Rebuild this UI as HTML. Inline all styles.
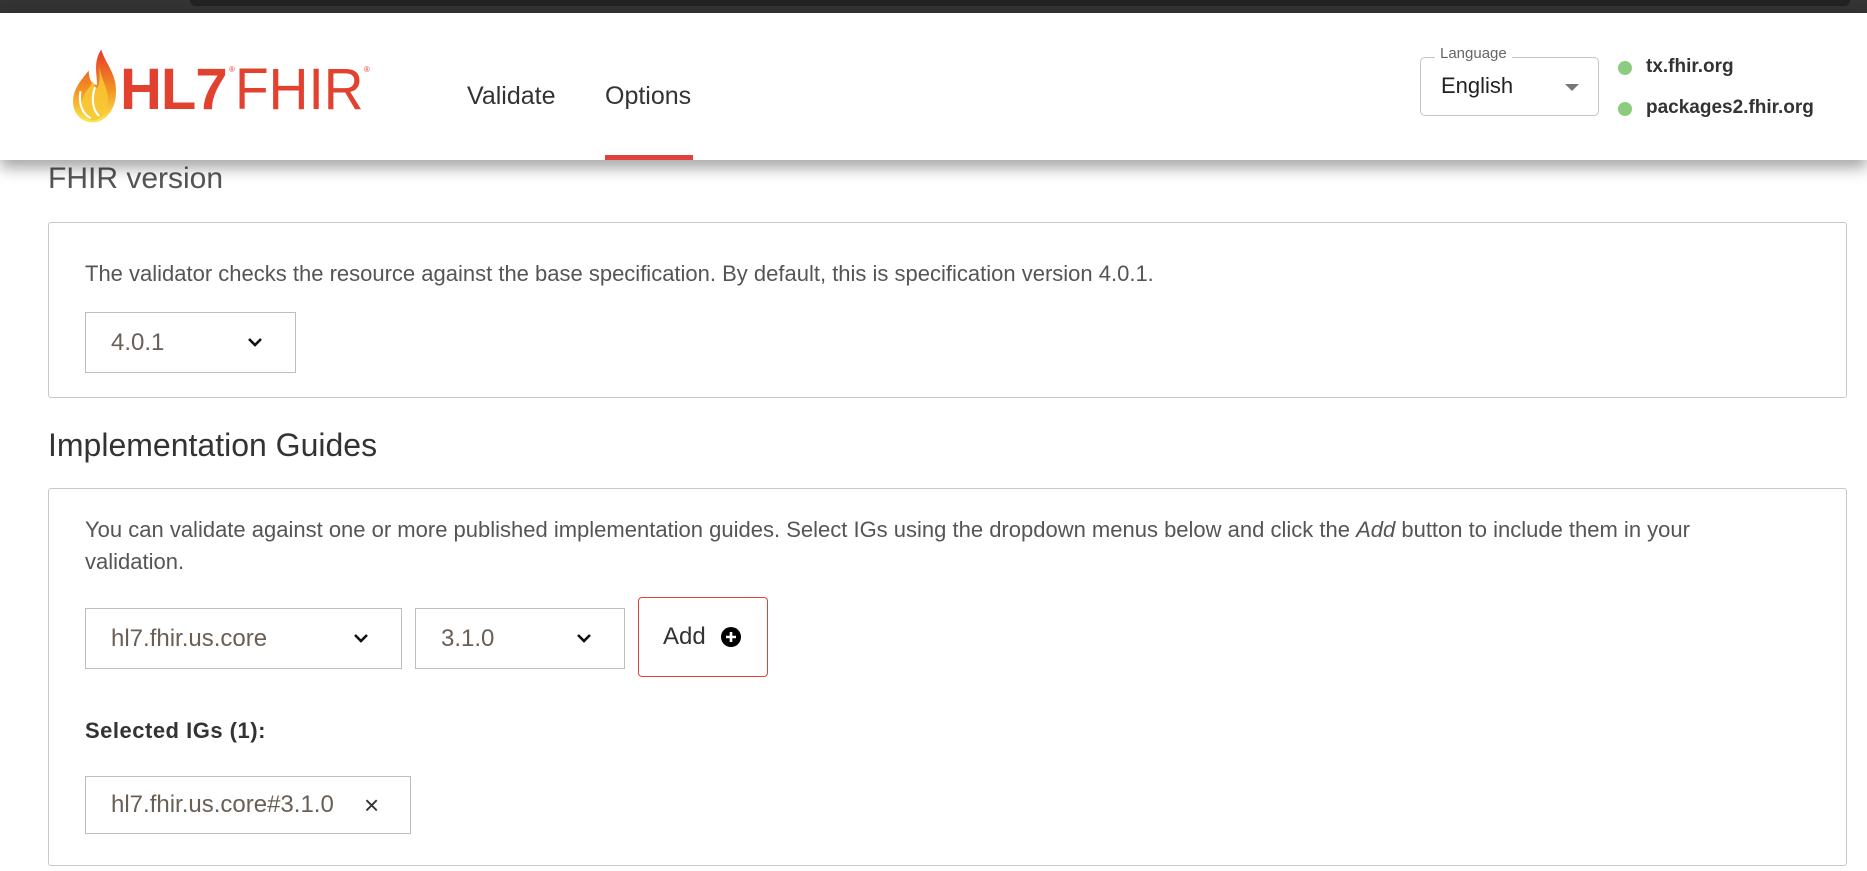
<!DOCTYPE html>
<html><head><meta charset="utf-8">
<style>
*{box-sizing:border-box;margin:0;padding:0}
body{width:1867px;height:871px;overflow:hidden;background:#fff;font-family:"Liberation Sans",sans-serif;position:relative;color:#555}
.abs{position:absolute}
#topbar{left:0;top:0;width:1867px;height:13px;background:#333}
#topbar div{position:absolute;left:190px;top:0;width:1660px;height:6px;background:#222;border-radius:0 0 8px 8px}
#header{left:0;top:13px;width:1867px;height:147px;background:#fff;box-shadow:0 8px 14px rgba(0,0,0,.35);z-index:5}
.nav{font-size:25px;color:#333}
.box{border:1px solid #c8c8c8;border-radius:3px;left:48px;width:1799px}
.sel{border:1px solid #bdbdbd;height:61px;font-size:24px;color:#6a5f55;display:flex;align-items:center;padding-left:25px}
.chev{position:absolute;right:32px;top:23px}
p.t{font-size:22px;color:#555;line-height:32px}
</style></head><body>
<div id="topbar" class="abs"><div></div></div>
<div id="header" class="abs">
  <svg class="abs" style="left:70px;top:36px" width="50" height="76" viewBox="0 0 48 72">
    <defs><linearGradient id="g" x1="0" y1="0" x2="0" y2="1"><stop offset="0" stop-color="#e63a2c"/><stop offset=".55" stop-color="#f39223"/><stop offset="1" stop-color="#fbe94a"/></linearGradient></defs>
    <path d="M30 0 C34 14 46 24 44 44 C43 60 32 70 22 70 C10 70 2 60 3 48 C4 36 12 28 18 20 C18 30 22 34 26 34 C26 24 22 12 30 0Z" fill="url(#g)"/>
    <path d="M28 16 C30 30 38 38 36 52 C35 62 28 68 22 68 C14 68 10 58 12 48 C14 40 20 36 22 30 C24 40 30 42 28 16Z" fill="#f7c734" opacity=".9"/>
    <path d="M10 40 C8 52 12 62 20 66" stroke="#fff" stroke-width="2" fill="none"/>
    <path d="M24 36 C20 48 22 58 28 64" stroke="#fff" stroke-width="2" fill="none"/>
  </svg>
  <div class="abs" style="left:120px;top:44px;font-size:58px;font-weight:bold;color:#e3412f;letter-spacing:-1px;line-height:66px">HL7</div>
  <div class="abs" style="left:229px;top:52px;font-size:8px;color:#e3412f">®</div>
  <div class="abs" style="left:235px;top:44px;font-size:58px;color:#e3412f;line-height:66px;transform:scaleX(.95);transform-origin:left">FHIR</div>
  <div class="abs" style="left:364px;top:52px;font-size:8px;color:#e3412f">®</div>
  <div class="abs nav" style="left:467px;top:69px">Validate</div>
  <div class="abs nav" style="left:605px;top:69px">Options</div>
  <div class="abs" style="left:605px;top:142px;width:88px;height:5px;background:#e0413a"></div>
  <div class="abs" style="left:1420px;top:44px;width:179px;height:59px;border:1px solid #c4c4c4;border-radius:5px"></div>
  <div class="abs" style="left:1435px;top:32px;padding:0 5px;background:#fff;font-size:15px;color:#666">Language</div>
  <div class="abs" style="left:1441px;top:60px;font-size:22px;color:#222">English</div>
  <div class="abs" style="left:1565px;top:71px;width:0;height:0;border-left:7px solid transparent;border-right:7px solid transparent;border-top:7px solid #777"></div>
  <div class="abs" style="left:1618px;top:48px;width:14px;height:14px;border-radius:50%;background:#8ccc7e"></div>
  <div class="abs" style="left:1618px;top:89px;width:14px;height:14px;border-radius:50%;background:#8ccc7e"></div>
  <div class="abs" style="left:1646px;top:43px;font-size:19px;font-weight:bold;color:#333">tx.fhir.org</div>
  <div class="abs" style="left:1646px;top:84px;font-size:19px;font-weight:bold;color:#333">packages2.fhir.org</div>
</div>

<div class="abs" style="left:48px;top:162px;font-size:30px;color:#555;z-index:1">FHIR version</div>
<div class="abs box" style="top:222px;height:176px"></div>
<p class="abs t" style="left:85px;top:258px">The validator checks the resource against the base specification. By default, this is specification version 4.0.1.</p>
<div class="abs sel" style="left:85px;top:312px;width:211px">4.0.1
  <svg class="chev" width="16" height="12" viewBox="0 0 16 12"><path d="M2 3 L8 9 L14 3" stroke="#111" stroke-width="2.6" fill="none"/></svg></div>

<div class="abs" style="left:48px;top:427px;font-size:32px;color:#333">Implementation Guides</div>
<div class="abs box" style="top:488px;height:378px"></div>
<p class="abs t" style="left:85px;top:514px;width:1660px">You can validate against one or more published implementation guides. Select IGs using the dropdown menus below and click the <i>Add</i> button to include them in your validation.</p>
<div class="abs sel" style="left:85px;top:608px;width:317px">hl7.fhir.us.core
  <svg class="chev" width="16" height="12" viewBox="0 0 16 12"><path d="M2 3 L8 9 L14 3" stroke="#111" stroke-width="2.6" fill="none"/></svg></div>
<div class="abs sel" style="left:415px;top:608px;width:210px">3.1.0
  <svg class="chev" width="16" height="12" viewBox="0 0 16 12"><path d="M2 3 L8 9 L14 3" stroke="#111" stroke-width="2.6" fill="none"/></svg></div>
<div class="abs" style="left:638px;top:597px;width:130px;height:80px;border:1px solid #e0413a;border-radius:4px"></div>
<div class="abs" style="left:663px;top:623px;font-size:24px;color:#333">Add</div>
<svg class="abs" style="left:721px;top:627px" width="20" height="20" viewBox="0 0 20 20"><circle cx="10" cy="10" r="10" fill="#000"/><path d="M10 5V15M5 10H15" stroke="#fff" stroke-width="2.6"/></svg>
<div class="abs" style="left:85px;top:718px;font-size:22px;font-weight:bold;color:#333;letter-spacing:.5px">Selected IGs (1):</div>
<div class="abs sel" style="left:85px;top:776px;width:326px;height:58px;font-size:24px">hl7.fhir.us.core#3.1.0
  <span style="position:absolute;left:278px;top:13px;font-size:26px;color:#333">×</span></div>
</body></html>
